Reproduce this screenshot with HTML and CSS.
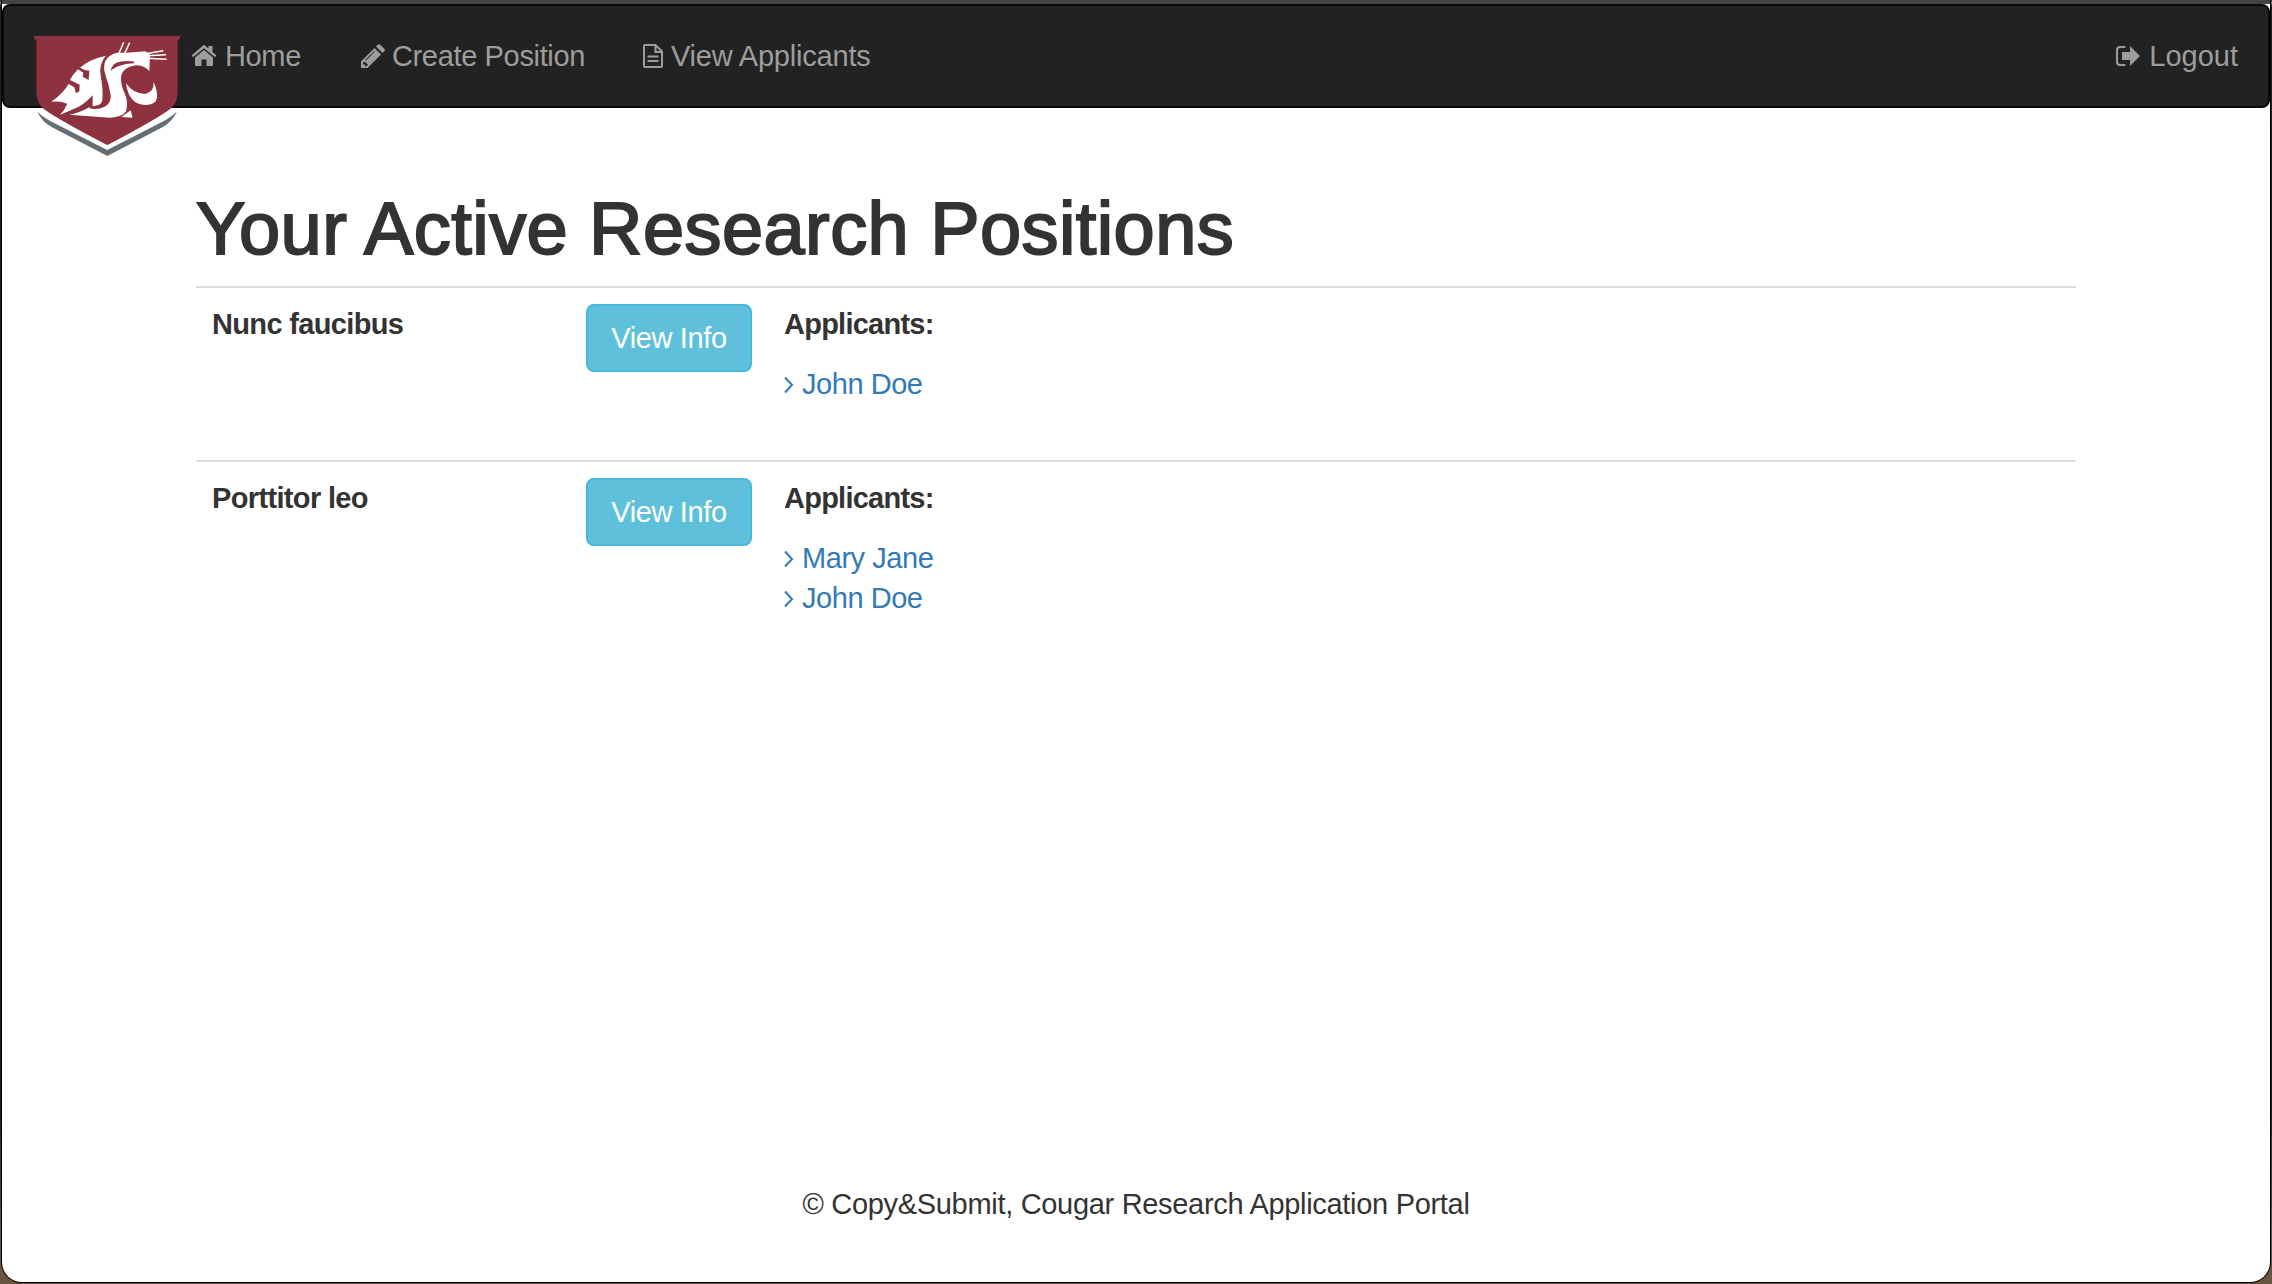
FILE: index.html
```html
<!DOCTYPE html>
<html lang="en">
<head>
<meta charset="utf-8">
<title>Research Positions</title>
<link rel="stylesheet" href="styles.css">
</head>
<body>
<div class="window">
  <nav class="navbar">
    <a class="brand" href="#">
      <svg viewBox="42 48 438 360">
        <path class="shield-fill" d="M42 48H480V56L473 60V212Q473 246 454 264Q430 286 262 376Q92 286 68 264Q49 246 49 212V60L42 56Z"/>
        <path class="shield-gap" d="M62 264Q80 284 262 376Q444 284 462 264L469 276L262 391L53 276Z"/>
        <path class="shield-edge" d="M51 274Q66 290 92 304L262 390L430 304Q456 290 471 274Q456 306 430 320L262 408L96 322Q66 306 51 274Z"/>
        <path class="cat" d="M94 245Q128 222 146 192L163 202L168 220L178 214L179 194L150 180Q158 164 174 148L190 158L188 170L206 180L208 152L194 150L180 143Q208 118 257 107Q236 134 242 166Q250 210 247 240Q246 256 222 258L218 259V226Q196 250 176 260Q150 272 120 284Q134 270 142 251Q122 242 94 245Z"/>
        <path class="cat" d="M148 284Q186 276 209 261V265Q232 270 254 260Q274 250 272 226Q268 196 256 164Q246 134 262 114Q276 100 294 98H320L376 94L390 104L388 153Q376 138 350 136Q308 140 303 172Q302 196 314 220Q326 248 318 274Q308 292 270 293Z"/>
        <path class="cat" d="M318 190Q340 222 376 222Q402 216 401 187Q412 208 411 234Q408 254 376 255Q326 254 318 190ZM304 291L332 271L338 293Z"/>
        <path class="whisker" d="M297 100L311 67M314 100L329 68M372 102L430 92M380 107L438 104M380 115L440 118"/>
        <path class="cat-line" d="M276 146Q284 121 342 127Q302 128 276 146Z"/>
      </svg>
    </a>
    <a class="link home" href="#"><svg class="ico" viewBox="0 0 26 28"><path d="M13 7L22 14.500V22a1 1 0 0 1-1 1H15.500V16.500H10.500V23H5a1 1 0 0 1-1-1V14.500ZM13 1.800L17.500 5.500V3H21.500V9L25.500 12.400L24 14.200L13 5.200L2 14.200L.5 12.400Z"/></svg><span>Home</span></a>
    <a class="link create" href="#"><svg class="ico" viewBox="0 0 26 28"><path fill-rule="evenodd" d="M1 25V18.500L14.500 5L21 11.500L7.500 25ZM3 20V21.500H5V23.300H6.500L8 21.800L4.600 18.400ZM6 17.400L14.800 8.600L14.200 8L5.400 16.800ZM16 3.500L18 1.500Q19 .8 20 1.500L24.500 6Q25.200 7 24.500 8L22.500 10Z"/></svg><span>Create Position</span></a>
    <a class="link view" href="#"><svg class="ico doc" viewBox="0 0 20 24"><path d="M1 2a1 1 0 0 1 1-1H12.500L19 7.500V22a1 1 0 0 1-1 1H2a1 1 0 0 1-1-1ZM12.500 1V8H19M4.500 12.500H15.500M4.500 17H15.500"/></svg><span>View Applicants</span></a>
    <a class="link logout" href="#"><svg class="ico" viewBox="0 0 26 28"><path d="M15 3L25 13L15 23V17H7V9H15Z"/><path class="stroke" d="M10.500 4H5Q2 4 2 7V19Q2 22 5 22H10.500"/></svg><span>Logout</span></a>
  </nav>
  <main class="container">
    <h1>Your Active Research Positions</h1>
    <section class="row">
      <strong>Nunc faucibus</strong>
      <a class="btn" href="#"><span>View Info</span></a>
      <div class="people">
        <strong>Applicants:</strong>
        <ul>
          <li><svg class="chev" viewBox="0 0 10 18"><path d="M1 1.500L8 9L1 16.500"/></svg><a href="#">John Doe</a></li>
        </ul>
      </div>
    </section>
    <section class="row">
      <strong>Porttitor leo</strong>
      <a class="btn" href="#"><span>View Info</span></a>
      <div class="people">
        <strong>Applicants:</strong>
        <ul>
          <li><svg class="chev" viewBox="0 0 10 18"><path d="M1 1.500L8 9L1 16.500"/></svg><a href="#">Mary Jane</a></li>
          <li><svg class="chev" viewBox="0 0 10 18"><path d="M1 1.500L8 9L1 16.500"/></svg><a href="#">John Doe</a></li>
        </ul>
      </div>
    </section>
  </main>
  <footer><span>© Copy&amp;Submit, Cougar Research Application Portal</span></footer>
</div>
</body>
</html>
```
FILE: styles.css
```css
* { box-sizing: border-box; }
body {
  margin: 0;
  height: 1284px;
  padding: 0 2px 2px;
  overflow: hidden;
  background: linear-gradient(#444 0 2px, #777 2px 4px, #1d242b 5px, #1b1c1d 1100px, #67533f 1240px);
  font-family: "Liberation Sans", Arial, sans-serif;
  font-size: 29px;
  line-height: 40px;
  letter-spacing: -0.35px;
  color: #333;
}
a { color: #337ab7; text-decoration: none; }
strong { letter-spacing: -0.65px; }
.window {
  display: flex;
  flex-direction: column;
  height: 1282px;
  border-top: 4px solid #777;
  border-image: linear-gradient(#444 50%, #777 50%) 4 0 0 / 4px 0 0;
  background: #fff;
  border-radius: 0 0 20px 20px;
  box-shadow: 0 0 0 1px #000;
}
.navbar {
  display: flex;
  align-items: flex-start;
  height: 104px;
  flex: none;
  padding: 30px 30px 0;
  border: 2px solid #080808;
  border-radius: 8px;
  background: #222;
}
.brand { width: 146px; height: 120px; flex: none; }
.brand svg { display: block; width: 146px; height: 120px; }
.shield-fill { fill: #8f3240; }
.shield-gap { fill: #fff; }
.shield-edge { fill: #656e72; }
.cat { fill: #fff; }
.cat-line { fill: #8f3240; stroke: #8f3240; stroke-width: 5; }
.whisker { fill: none; stroke: #fff; stroke-width: 4.5; }
.link { display: flex; color: #9d9d9d; }
.ico { width: 26px; height: 28px; margin-top: 7px; fill: #9d9d9d; flex: none; }
.ico .stroke { fill: none; stroke: #9d9d9d; stroke-width: 2; }
.doc { width: 20px; height: 24px; margin-top: 8px; fill: none; stroke: #9d9d9d; stroke-width: 2; }
.home { margin-left: 11px; }
.home span { margin-left: 8px; }
.create { margin-left: 59px; }
.create span { margin-left: 6px; }
.view { margin-left: 58px; letter-spacing: -0.2px; }
.view span { margin-left: 8px; }
.logout { margin-left: auto; letter-spacing: 0; }
.logout span { margin-left: 8px; }
.container { width: 1880px; margin: 81px auto 0; }
h1 {
  margin: 0 0 17px;
  font-size: 74px;
  font-weight: 400;
  line-height: 80px;
  letter-spacing: 0.42px;
  -webkit-text-stroke: 2px #333;
  white-space: nowrap;
}
.row {
  display: grid;
  grid-template-columns: 374px 166px 1fr;
  align-items: start;
  height: 174px;
  padding: 16px 16px 0;
  border-top: 2px solid #ddd;
}
.btn {
  display: block;
  height: 68px;
  padding: 12px 0;
  border: 2px solid #46b8da;
  border-radius: 8px;
  background: #5fc0dc;
  color: #fff;
  text-align: center;
}
.people { padding-left: 32px; }
.people strong { display: block; letter-spacing: -0.75px; }
ul { margin: 20px 0 0; padding: 0; list-style: none; }
li { display: flex; letter-spacing: -0.45px; }
.chev { width: 10px; height: 18px; margin: 12px 8px 0 0; fill: none; stroke: #337ab7; stroke-width: 2; }
footer { margin-top: auto; padding-bottom: 58px; text-align: center; letter-spacing: -0.31px; }
```
